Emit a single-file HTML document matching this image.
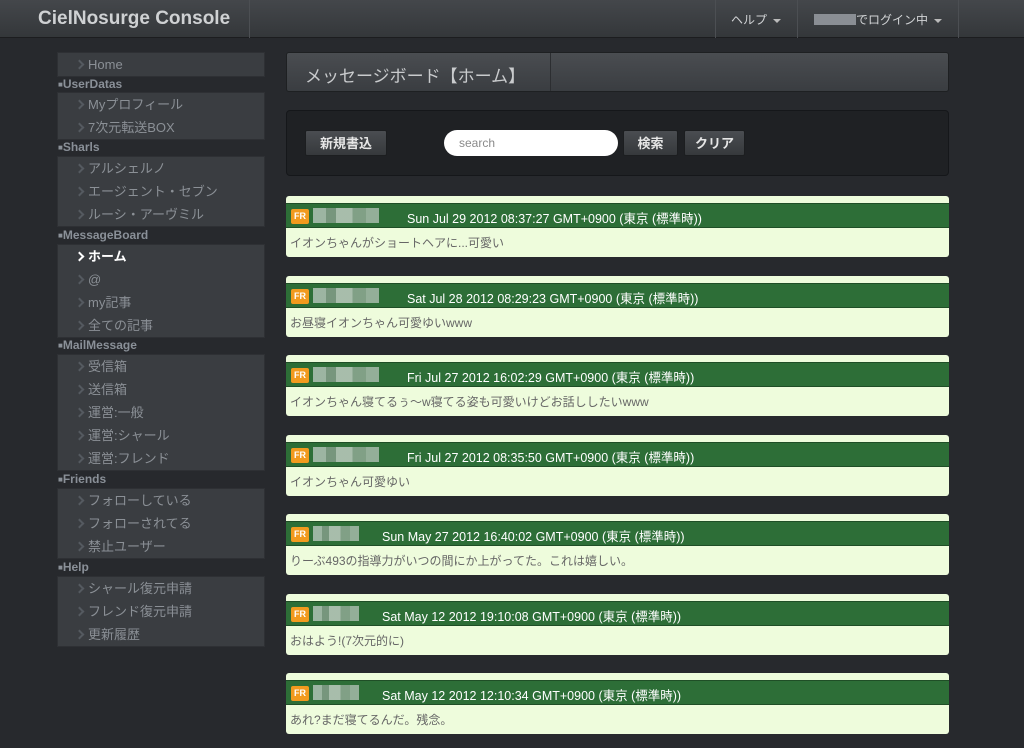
<!DOCTYPE html><html><head><meta charset="utf-8"><style>
*{margin:0;padding:0;box-sizing:border-box}
body{width:1024px;height:748px;background:#27292d;font-family:"Liberation Sans","Noto Sans CJK JP",sans-serif;position:relative;overflow:hidden}
.nav{position:absolute;left:0;top:0;width:1024px;height:38px;background:linear-gradient(#44474b,#34373a);border-bottom:1px solid #1c1d1f}
.nav .t{position:absolute;left:38px;top:8px;font-size:19px;font-weight:bold;color:#cfd1d3}
.sep{position:absolute;top:0;width:1px;height:38px;background:#2a2c2f;border-right:1px solid #4c4f53}
.nav .r{position:absolute;top:11px;font-size:12px;color:#d2d4d6}
.caret{display:inline-block;width:0;height:0;border-left:4px solid transparent;border-right:4px solid transparent;border-top:4px solid #bbb;margin-left:6px;vertical-align:middle}
.box{position:absolute;left:57px;width:208px;background:#3a3d41;border:1px solid #2e3034}
.it{height:23px;line-height:23px;font-size:13px;color:#8b9096;padding-left:18px;position:relative}
.it:before{content:"";position:absolute;left:18px;top:8px;width:5px;height:5px;border-right:2px solid #555a60;border-top:2px solid #555a60;transform:rotate(45deg)}
.it span{margin-left:12px}
.it.a{color:#fff;font-weight:bold}.it.a:before{border-color:#fff}
.h{position:absolute;left:58px;font-size:12px;font-weight:bold;color:#8a9098;line-height:15px}
.h:before{content:"■";font-size:8px;vertical-align:1px}
.title{position:absolute;left:286px;top:52px;width:663px;height:40px;border:1px solid #1e2022;border-radius:3px;background:linear-gradient(#4a4d51,#3a3d41)}
.title .tx{position:absolute;left:18px;top:9px;font-size:17px;color:#c9cbcd}
.title .s{position:absolute;left:263px;top:0;width:1px;height:38px;background:#2c2e31}
.panel{position:absolute;left:286px;top:110px;width:663px;height:66px;background:#1f2124;border:1px solid #15171a;border-radius:4px}
.btn{position:absolute;top:130px;height:26px;line-height:25px;text-align:center;font-size:13px;font-weight:bold;color:#e6e6e6;background:linear-gradient(#4a4d51,#36393c);border:1px solid #1c1e20;border-radius:2px}
.srch{position:absolute;left:444px;top:130px;width:174px;height:26px;border-radius:13px;background:#fff;font-size:12px;color:#8a8a8a;line-height:26px;padding-left:15px}
.m{position:absolute;left:286px;width:663px;height:61px;background:#eefcdc;border-radius:3px}
.m .g{position:absolute;left:0;top:7px;width:663px;height:25px;background:#2d6e37;border-top:1px solid #1f4e26;border-bottom:1px solid #1f4e26}
.fr{position:absolute;left:5px;top:5px;width:18px;height:15px;background:#f29a1e;border-radius:2px;color:#fff;font-size:9px;font-weight:bold;text-align:center;line-height:15px}
.bl{position:absolute;top:4px;height:15px;background:linear-gradient(90deg,#a9bdae 0 20%,#7f9a85 20% 35%,#b5c6b8 35% 60%,#8aa58f 60% 80%,#a0b6a4 80%);opacity:.9}
.d{position:absolute;top:4px;font-size:12.5px;color:#fff}
.m .b{position:absolute;left:4px;top:38px;font-size:12px;color:#666}
</style></head><body>
<div class="nav"><div class="t">CielNosurge Console</div>
<div class="sep" style="left:249px"></div><div class="sep" style="left:715px"></div><div class="sep" style="left:797px"></div><div class="sep" style="left:958px"></div>
<div class="r" style="left:731px">ヘルプ<span class="caret"></span></div>
<div class="r" style="left:814px"><span style="display:inline-block;width:42px;height:11px;background:#8a8e94;vertical-align:-1px"></span>でログイン中<span class="caret"></span></div></div>

<div class="box" style="top:52px"><div class="it"><span>Home</span></div></div>
<div class="h" style="top:77px">UserDatas</div>
<div class="box" style="top:92px"><div class="it"><span>Myプロフィール</span></div><div class="it"><span>7次元転送BOX</span></div></div>
<div class="h" style="top:140px">Sharls</div>
<div class="box" style="top:156px"><div class="it"><span>アルシェルノ</span></div><div class="it"><span>エージェント・セブン</span></div><div class="it"><span>ルーシ・アーヴミル</span></div></div>
<div class="h" style="top:228px">MessageBoard</div>
<div class="box" style="top:244px"><div class="it a"><span>ホーム</span></div><div class="it"><span>@</span></div><div class="it"><span>my記事</span></div><div class="it"><span>全ての記事</span></div></div>
<div class="h" style="top:338px">MailMessage</div>
<div class="box" style="top:354px"><div class="it"><span>受信箱</span></div><div class="it"><span>送信箱</span></div><div class="it"><span>運営:一般</span></div><div class="it"><span>運営:シャール</span></div><div class="it"><span>運営:フレンド</span></div></div>
<div class="h" style="top:472px">Friends</div>
<div class="box" style="top:488px"><div class="it"><span>フォローしている</span></div><div class="it"><span>フォローされてる</span></div><div class="it"><span>禁止ユーザー</span></div></div>
<div class="h" style="top:560px">Help</div>
<div class="box" style="top:576px"><div class="it"><span>シャール復元申請</span></div><div class="it"><span>フレンド復元申請</span></div><div class="it"><span>更新履歴</span></div></div>

<div class="title"><div class="tx">メッセージボード【ホーム】</div><div class="s"></div></div>
<div class="panel"></div>
<div class="btn" style="left:305px;width:82px">新規書込</div>
<div class="srch">search</div>
<div class="btn" style="left:623px;width:55px">検索</div>
<div class="btn" style="left:684px;width:61px">クリア</div>

<div class="m" style="top:196px"><div class="g"><div class="fr">FR</div><div class="bl" style="left:27px;width:66px"></div><div class="d" style="left:121px">Sun Jul 29 2012 08:37:27 GMT+0900 (東京 (標準時))</div></div><div class="b">イオンちゃんがショートヘアに...可愛い</div></div>
<div class="m" style="top:276px"><div class="g"><div class="fr">FR</div><div class="bl" style="left:27px;width:66px"></div><div class="d" style="left:121px">Sat Jul 28 2012 08:29:23 GMT+0900 (東京 (標準時))</div></div><div class="b">お昼寝イオンちゃん可愛ゆいwww</div></div>
<div class="m" style="top:355px"><div class="g"><div class="fr">FR</div><div class="bl" style="left:27px;width:66px"></div><div class="d" style="left:121px">Fri Jul 27 2012 16:02:29 GMT+0900 (東京 (標準時))</div></div><div class="b">イオンちゃん寝てるぅ～w寝てる姿も可愛いけどお話ししたいwww</div></div>
<div class="m" style="top:435px"><div class="g"><div class="fr">FR</div><div class="bl" style="left:27px;width:66px"></div><div class="d" style="left:121px">Fri Jul 27 2012 08:35:50 GMT+0900 (東京 (標準時))</div></div><div class="b">イオンちゃん可愛ゆい</div></div>
<div class="m" style="top:514px"><div class="g"><div class="fr">FR</div><div class="bl" style="left:27px;width:46px"></div><div class="d" style="left:96px">Sun May 27 2012 16:40:02 GMT+0900 (東京 (標準時))</div></div><div class="b">りーぶ493の指導力がいつの間にか上がってた。これは嬉しい。</div></div>
<div class="m" style="top:594px"><div class="g"><div class="fr">FR</div><div class="bl" style="left:27px;width:46px"></div><div class="d" style="left:96px">Sat May 12 2012 19:10:08 GMT+0900 (東京 (標準時))</div></div><div class="b">おはよう!(7次元的に)</div></div>
<div class="m" style="top:673px"><div class="g"><div class="fr">FR</div><div class="bl" style="left:27px;width:46px"></div><div class="d" style="left:96px">Sat May 12 2012 12:10:34 GMT+0900 (東京 (標準時))</div></div><div class="b">あれ?まだ寝てるんだ。残念。</div></div>
</body></html>
